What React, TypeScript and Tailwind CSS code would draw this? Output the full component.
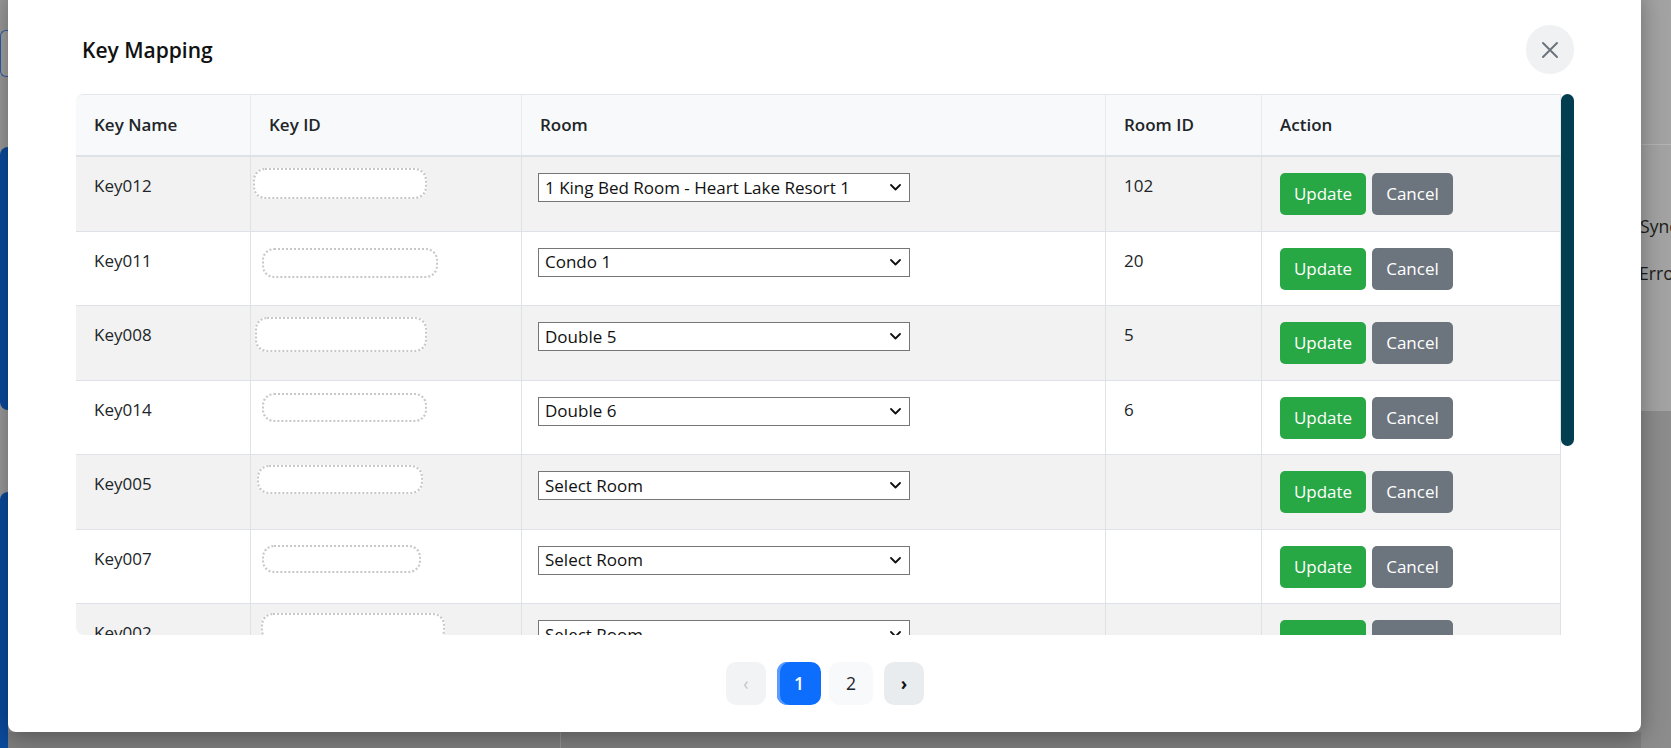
import React from 'react';

type Row = {
  name: string;
  room: string;
  roomId: string;
  pill: string;
};

const rows: Row[] = [
  { name: 'Key012', room: '1 King Bed Room - Heart Lake Resort 1', roomId: '102', pill: 'ml-[2px] mt-[11px] w-[174px] h-[31px]' },
  { name: 'Key011', room: 'Condo 1', roomId: '20', pill: 'ml-[11px] mt-[16px] w-[176px] h-[30px]' },
  { name: 'Key008', room: 'Double 5', roomId: '5', pill: 'ml-[4px] mt-[11px] w-[172px] h-[35px]' },
  { name: 'Key014', room: 'Double 6', roomId: '6', pill: 'ml-[11px] mt-[12px] w-[165px] h-[29px]' },
  { name: 'Key005', room: 'Select Room', roomId: '', pill: 'ml-[6px] mt-[10px] w-[166px] h-[29px]' },
  { name: 'Key007', room: 'Select Room', roomId: '', pill: 'ml-[11px] mt-[15px] w-[159px] h-[28px]' },
  { name: 'Key002', room: 'Select Room', roomId: '', pill: 'ml-[10px] mt-[9px] w-[184px] h-[29px]' },
];

const cols = 'grid grid-cols-[175px_271px_584px_156px_299px]';

const Chevron = () => (
  <svg width="11" height="7" viewBox="0 0 11 7" fill="none">
    <path d="M1 1l4.5 4.5L10 1" stroke="#111" strokeWidth="1.8" strokeLinecap="round" strokeLinejoin="round" />
  </svg>
);

const BackgroundPage: React.FC = () => (
  <div className="flex h-full w-full">
    <div className="flex w-[8px] flex-col bg-[#9a9a9a]">
      <div className="h-[30px]" />
      <div className="h-[47px] rounded-tl-[6px] rounded-bl-[6px] border border-r-0 border-[#2d5da6] bg-[#a2a2a2]" />
      <div className="h-[70px]" />
      <div className="h-[263px] rounded-tl-[8px] rounded-bl-[8px] bg-[#0b4a9c]" />
      <div className="h-[82px]" />
      <div className="flex-1 rounded-tl-[8px] bg-[#0b4a9c]" />
    </div>
    <div className="flex flex-1 flex-col">
      <div className="flex-1" />
      <div className="flex h-[16px] bg-[#7e7e7e]">
        <div className="w-[552px]" />
        <div className="w-px bg-[#939393]" />
      </div>
    </div>
    <div className="flex w-[30px] flex-col overflow-hidden">
      <div className="h-[144px] bg-[#a3a3a3]" />
      <div className="h-px bg-[#b4b4b4]" />
      <div className="flex h-[266px] flex-col bg-[#a3a3a3] pt-[68px] text-[17.6px] text-[#1c1c1c]">
        <span className="-ml-[1px] leading-[26px]">Sync</span>
        <span className="-ml-[2px] mt-[21px] leading-[26px]">Error</span>
      </div>
      <div className="flex-1 bg-[#8c8c8c]" />
    </div>
  </div>
);

export default function App() {
  return (
    <div className="relative h-[748px] w-[1671px] overflow-hidden bg-[#8c8c8c] font-['Open_Sans',sans-serif] text-[#212529]">
      <BackgroundPage />

      <div className="absolute inset-0 pl-[8px]">
        <div className="-mt-[10px] flex h-[742px] w-[1633px] flex-col rounded-[8px] bg-white pl-[68px] pr-[67px] shadow-[0_4px_24px_rgba(0,0,0,0.35)]">
          <div className="flex items-center justify-between pt-[35px]">
            <h5 className="pl-[6px] text-[21px] font-semibold leading-[26px] text-[#111]">Key Mapping</h5>
            <button className="flex h-[49px] w-[48px] items-center justify-center rounded-full bg-[#f0f1f2]">
              <svg width="18" height="18" viewBox="0 0 18 18" fill="none">
                <path d="M2 2l14 14M16 2L2 16" stroke="#6c757d" strokeWidth="2" strokeLinecap="round" />
              </svg>
            </button>
          </div>

          <div className="mt-[20px] flex h-[541px]">
            <div className="flex-1 overflow-hidden rounded-l-[8px] border-t border-[#e4e7ea] text-[17px] leading-[26px]">
              <div className={`${cols} border-b-2 border-[#dee2e6] bg-[#f8f9fa] font-semibold`}>
                {['Key Name', 'Key ID', 'Room', 'Room ID', 'Action'].map((h) => (
                  <div key={h} className="border-r border-[#e9ecef] px-[18px] pb-[17px] pt-[17px]">{h}</div>
                ))}
              </div>
              {rows.map((r, i) => (
                <div key={r.name} className={`${cols} border-b border-[#dee2e6] ${i % 2 === 0 ? 'bg-[#f2f2f2]' : 'bg-white'}`}>
                  <div className="border-r border-[#dee2e6] px-[18px] pt-[16px]">{r.name}</div>
                  <div className="border-r border-[#dee2e6]">
                    <div className={`${r.pill} rounded-[12px] border-2 border-dotted border-[#c8c8c8] bg-white`} />
                  </div>
                  <div className="border-r border-[#dee2e6] px-[16px] pt-[16px]">
                    <div className="flex h-[29px] w-[372px] items-center justify-between border border-[#767676] bg-white pl-[6px] pr-[8px]">
                      <span className="text-[17px] leading-[26px] text-[#111]">{r.room}</span>
                      <Chevron />
                    </div>
                  </div>
                  <div className="border-r border-[#dee2e6] px-[18px] pt-[16px]">{r.roomId}</div>
                  <div className="flex gap-[6px] border-r border-[#dee2e6] px-[18px] pb-[15.5px] pt-[16px]">
                    <button className="h-[42px] w-[86px] rounded-[5px] bg-[#28a745] text-white">Update</button>
                    <button className="h-[42px] w-[81px] rounded-[5px] bg-[#6c757d] text-white">Cancel</button>
                  </div>
                </div>
              ))}
            </div>
            <div className="w-[13px]">
              <div className="h-[352px] rounded-full bg-[#033d50]" />
            </div>
          </div>

          <div className="mt-[27px] flex justify-center gap-[8px] text-[17.6px]">
            <button className="h-[43px] w-[40px] rounded-[10px] bg-[#f1f3f5] text-[#c3c7cb]">‹</button>
            <button className="ml-[3px] h-[43px] w-[44px] rounded-[10px] bg-[#0d6efd] font-semibold text-white shadow-[inset_3px_0_0_#5a9cff]">1</button>
            <button className="h-[43px] w-[44px] rounded-[10px] bg-[#f8f9fa] text-[#212529]">2</button>
            <button className="ml-[3px] h-[43px] w-[40px] rounded-[10px] bg-[#e9ecef] font-bold text-[#111]">›</button>
          </div>
        </div>
      </div>
    </div>
  );
}
